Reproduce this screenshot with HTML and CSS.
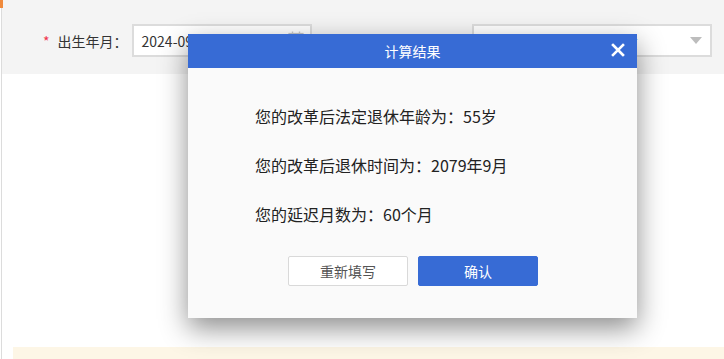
FILE: index.html
```html
<!DOCTYPE html>
<html lang="zh-CN">
<head>
    <meta charset="UTF-8">
    <meta name="viewport" content="width=device-width, initial-scale=1.0">
    <title>退休年龄计算器</title>
    <link rel="stylesheet" href="styles.css">
</head>
<body>
    <div class="page">
        <span class="corner-mark"></span>

        <!-- 表单区 -->
        <div class="form-bar">
            <div class="field">
                <label class="field-label"><span class="req">*</span>出生年月：</label>
                <div class="input date-input">
                    <span class="input-text">2024-09</span>
                    <svg class="calendar-icon" width="16" height="14" viewBox="0 0 16 14">
                        <rect x="1" y="2.5" width="14" height="11" fill="none" stroke="#c8c8c8" stroke-width="1.2"/>
                        <line x1="1" y1="5.5" x2="15" y2="5.5" stroke="#c8c8c8" stroke-width="1.2"/>
                        <line x1="4.5" y1="0.5" x2="4.5" y2="3.5" stroke="#c8c8c8" stroke-width="1.4"/>
                        <line x1="11.5" y1="0.5" x2="11.5" y2="3.5" stroke="#c8c8c8" stroke-width="1.4"/>
                    </svg>
                </div>
            </div>
            <div class="field field-type">
                <label class="field-label"><span class="req">*</span>退休前人员类别：</label>
                <div class="input select-input">
                    <span class="input-text">原法定退休年龄55周岁女</span>
                    <span class="select-arrow"></span>
                </div>
            </div>
        </div>

        <div class="content"></div>

        <div class="notice"></div>

        <!-- 计算结果弹窗 -->
        <div class="dialog">
            <div class="dialog-header">
                <span class="dialog-title">计算结果</span>
                <span class="dialog-close">
                    <svg width="14" height="14" viewBox="0 0 14 14">
                        <path d="M2 2 L12 12 M12 2 L2 12" stroke="#fff" stroke-width="2.6" stroke-linecap="square"/>
                    </svg>
                </span>
            </div>
            <div class="dialog-body">
                <p class="result-line">您的改革后法定退休年龄为：55岁</p>
                <p class="result-line">您的改革后退休时间为：2079年9月</p>
                <p class="result-line">您的延迟月数为：60个月</p>
                <div class="dialog-actions">
                    <button class="btn btn-default">重新填写</button>
                    <button class="btn btn-primary">确认</button>
                </div>
            </div>
        </div>
    </div>
</body>
</html>
```

FILE: styles.css
```css
body {
    margin: 0;
    background-color: #fff;
    font-family: "Microsoft YaHei", "Noto Sans CJK SC", "Noto Sans", sans-serif;
    color: #333;
    overflow: hidden;
}

.page {
    position: relative;
    margin-left: 1px;
    border-left: 1px solid #dcdcdc;
    height: 359px;
}

.corner-mark {
    position: absolute;
    left: -2px;
    top: 0;
    width: 3px;
    height: 8px;
    background-color: #f08a3c;
}

/* 表单区 */
.form-bar {
    display: flex;
    align-items: center;
    height: 74px;
    box-sizing: border-box;
    padding: 24px 0 17px 41px;
    background-color: #f4f4f4;
}

.field {
    display: flex;
    align-items: center;
}

.field-type {
    margin-left: 31px;
}

.field-label {
    font-size: 14px;
    color: #333;
    white-space: nowrap;
}

.req {
    color: #f0324b;
    margin-right: 8px;
    font-size: 14px;
}

.input {
    position: relative;
    display: flex;
    align-items: center;
    height: 33px;
    box-sizing: border-box;
    border: 2px solid #dcdcdc;
    background-color: #fff;
    padding: 0 8px;
    font-size: 14px;
    color: #333;
    overflow: hidden;
    white-space: nowrap;
}

.date-input {
    width: 180px;
    margin-left: 4px;
}

.calendar-icon {
    margin-left: auto;
    margin-top: -6px;
    margin-right: -2px;
}

.select-input {
    width: 240px;
    margin-left: 3px;
}

.select-arrow {
    margin-left: auto;
    width: 0;
    height: 0;
    border-left: 6px solid transparent;
    border-right: 6px solid transparent;
    border-top: 7px solid #bdbdbd;
}

.content {
    height: 273px;
}

.notice {
    margin-left: 11px;
    height: 20px;
    background-color: #fdf6e6;
}

/* 弹窗 */
.dialog {
    position: absolute;
    left: 186px;
    top: 34px;
    width: 449px;
    height: 284px;
    background-color: #fafafa;
    box-shadow: 0 10px 26px rgba(0, 0, 0, 0.45);
}

.dialog-header {
    position: relative;
    height: 34px;
    background-color: #376bd5;
    display: flex;
    align-items: center;
    justify-content: center;
}

.dialog-title {
    color: #fff;
    font-size: 14px;
}

.dialog-close {
    position: absolute;
    right: 12px;
    top: 9px;
    width: 14px;
    height: 14px;
    display: flex;
    cursor: pointer;
}

.dialog-body {
    padding: 36px 0 0 67px;
}

.result-line {
    margin: 0 0 25px;
    font-size: 16px;
    line-height: 24px;
    color: #222;
}

.dialog-actions {
    display: flex;
    gap: 10px;
    margin-top: 30px;
    margin-left: 33px;
}

.btn {
    width: 120px;
    height: 30px;
    box-sizing: border-box;
    font-family: inherit;
    font-size: 14px;
    border-radius: 2px;
    cursor: pointer;
}

.btn-default {
    background-color: #fff;
    border: 1px solid #d9d9d9;
    color: #555;
}

.btn-primary {
    background-color: #376bd5;
    border: 1px solid #376bd5;
    color: #fff;
}
```
